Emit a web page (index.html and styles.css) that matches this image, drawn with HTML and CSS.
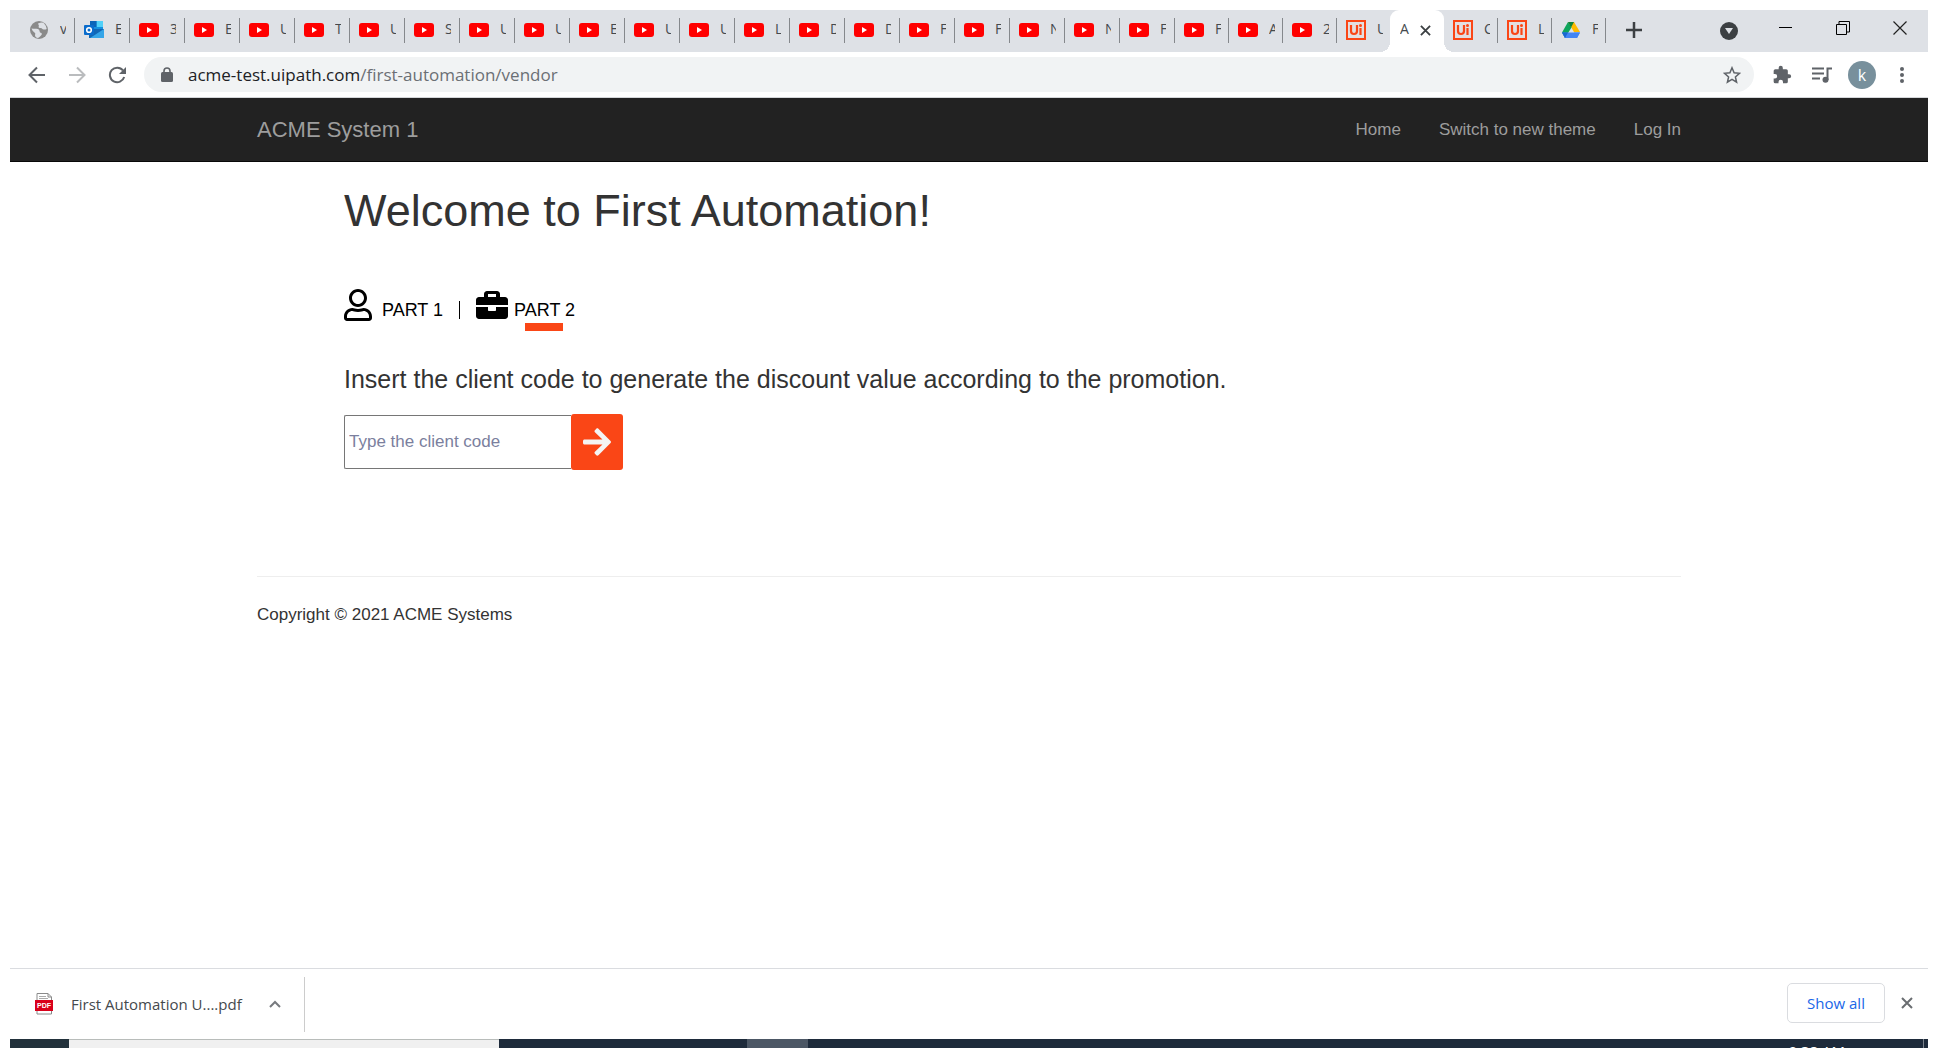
FILE: index.html
```html
<!DOCTYPE html>
<html lang="en">
<head>
<meta charset="utf-8">
<title>ACME System 1</title>
<link rel="stylesheet" href="styles.css">
</head>
<body>
<svg class="sprite" aria-hidden="true">
  <symbol id="yt" viewBox="0 0 20 20"><rect y="3" width="20" height="14" rx="3" fill="#f00"/><path d="M8 7l5 3-5 3z" fill="#fff"/></symbol>
  <symbol id="ui" viewBox="0 0 20 20"><rect x="1" y="1" width="18" height="18" fill="#e3dfe1" stroke="#fa4616" stroke-width="2"/><path d="M5 5v6q0 3 3 3t3-3V5M14.500 8v7" fill="none" stroke="#fa4616" stroke-width="2.200"/><circle cx="14.500" cy="5.500" r="1.500" fill="#fa4616"/></symbol>
</svg>
<div class="window">
  <header class="tabstrip">
    <nav class="tabs" id="tabs" aria-label="Browser tabs">
      <button class="tab"><svg class="fav" viewBox="0 0 20 20"><circle cx="10" cy="10" r="9" fill="#8a8a8a"/><path d="M2.500 8.500q3 .5 5 .2 3 .3 3 2.300t2 2q1 1-.5 2.500T9 18q-3-.5-3-3 1-1.500-.5-2.500-2-1-3-4zM9 3.500q5-2 6.500.5 2 2 2.200 5-2 1-4 .2-1-1.500-3.200-1.200-2-1-.5-2z" fill="#dee1e6"/></svg><span>v</span></button>
      <button class="tab"><svg class="fav" viewBox="0 0 20 20"><path d="M6 1h13v13H6z" fill="#1490df"/><path d="M12.500 1H19v6h-6.500z" fill="#50d0f8"/><path d="M6 1h6.500v6H6z" fill="#0a64b8"/><path d="M5 9l15 0v9H5z" fill="#1066b5"/><path d="M20 9v9H6z" fill="#35a5e8"/><rect y="5" width="10" height="10" rx="1" fill="#0a6ccc"/><circle cx="5" cy="10" r="2.300" fill="none" stroke="#fff" stroke-width="1.600"/></svg><span>E</span></button>
      <button class="tab"><svg class="fav"><use href="#yt"/></svg><span>3</span></button>
      <button class="tab"><svg class="fav"><use href="#yt"/></svg><span>E</span></button>
      <button class="tab"><svg class="fav"><use href="#yt"/></svg><span>U</span></button>
      <button class="tab"><svg class="fav"><use href="#yt"/></svg><span>T</span></button>
      <button class="tab"><svg class="fav"><use href="#yt"/></svg><span>U</span></button>
      <button class="tab"><svg class="fav"><use href="#yt"/></svg><span>S</span></button>
      <button class="tab"><svg class="fav"><use href="#yt"/></svg><span>U</span></button>
      <button class="tab"><svg class="fav"><use href="#yt"/></svg><span>U</span></button>
      <button class="tab"><svg class="fav"><use href="#yt"/></svg><span>E</span></button>
      <button class="tab"><svg class="fav"><use href="#yt"/></svg><span>U</span></button>
      <button class="tab"><svg class="fav"><use href="#yt"/></svg><span>U</span></button>
      <button class="tab"><svg class="fav"><use href="#yt"/></svg><span>L</span></button>
      <button class="tab"><svg class="fav"><use href="#yt"/></svg><span>D</span></button>
      <button class="tab"><svg class="fav"><use href="#yt"/></svg><span>D</span></button>
      <button class="tab"><svg class="fav"><use href="#yt"/></svg><span>F</span></button>
      <button class="tab"><svg class="fav"><use href="#yt"/></svg><span>F</span></button>
      <button class="tab"><svg class="fav"><use href="#yt"/></svg><span>N</span></button>
      <button class="tab"><svg class="fav"><use href="#yt"/></svg><span>N</span></button>
      <button class="tab"><svg class="fav"><use href="#yt"/></svg><span>F</span></button>
      <button class="tab slim"><svg class="fav"><use href="#yt"/></svg><span>F</span></button>
      <button class="tab slim"><svg class="fav"><use href="#yt"/></svg><span>A</span></button>
      <button class="tab slim"><svg class="fav"><use href="#yt"/></svg><span>2</span></button>
      <button class="tab plain"><svg class="fav"><use href="#ui"/></svg><span>U</span></button>
      <button class="tab slim active"><span>A</span><svg class="tab-x" viewBox="0 0 12 12"><path d="M1 1l10 10M11 1L1 11"/></svg></button>
      <button class="tab slim"><svg class="fav"><use href="#ui"/></svg><span>C</span></button>
      <button class="tab slim"><svg class="fav"><use href="#ui"/></svg><span>L</span></button>
      <button class="tab slim"><svg class="fav" viewBox="0 0 20 20"><path d="M7 2h6l6 10h-6z" fill="#ffba00"/><path d="M7 2l3.500 5.500L4 18 1 12.500z" fill="#0da55b"/><path d="M7 2h6l-3 5.500z" fill="#11833c"/><path d="M1 12.500L4 18h12l3-5.500z" fill="#4285f4"/><path d="M1 12.500h6L4 18z" fill="#1967d2"/><path d="M13 12.500h6L16 18z" fill="#4285f4"/></svg><span>F</span></button>
    </nav>
    <button class="new-tab" aria-label="New tab"><svg width="16" height="16" viewBox="0 0 16 16"><path d="M8 0v16M0 8h16" stroke="#3c4043" stroke-width="2.500"/></svg></button>
    <div class="window-controls">
      <button class="tab-search" aria-label="Search tabs"><svg width="18" height="18" viewBox="0 0 18 18"><circle cx="9" cy="9" r="9" fill="#3c4043"/><path d="M5 6h8l-4 6z" fill="#dee1e6"/></svg></button>
      <button aria-label="Minimize"><svg width="14" height="14" viewBox="0 0 14 14"><path d="M0 6.500h13" stroke="#000"/></svg></button>
      <button aria-label="Restore"><svg width="14" height="14" viewBox="0 0 14 14"><path d="M.5 3.500h10v10H.5zM3 3V.5h10.500V11H11" fill="none" stroke="#000"/></svg></button>
      <button aria-label="Close"><svg width="14" height="14" viewBox="0 0 14 14"><path d="M.5.5l13 13M13.500.5l-13 13" stroke="#222" stroke-width="1.200"/></svg></button>
    </div>
  </header>

  <div class="toolbar">
    <div class="history">
      <button aria-label="Back"><svg width="18" height="18" viewBox="0 0 18 18"><path d="M17 9H2M9 1.500L1.500 9 9 16.500" fill="none" stroke="#5f6368" stroke-width="2"/></svg></button>
      <button aria-label="Forward"><svg width="18" height="18" viewBox="0 0 18 18"><path d="M1 9h15M9 1.500L16.500 9 9 16.500" fill="none" stroke="#babcbe" stroke-width="2"/></svg></button>
      <button aria-label="Reload"><svg width="18" height="18" viewBox="0 0 18 18"><path d="M15 4.500A7.300 7.300 0 1 0 16.200 11" fill="none" stroke="#5f6368" stroke-width="2"/><path d="M18 1v7h-7z" fill="#5f6368"/></svg></button>
    </div>
    <div class="omnibox">
      <svg width="12" height="16" viewBox="0 0 12 16"><rect y="5" width="12" height="10" rx="1.500" fill="#5f6368"/><path d="M3 6V4a3 3 0 0 1 6 0v2" fill="none" stroke="#5f6368" stroke-width="1.600"/></svg>
      <a class="url" href="#">acme-test.uipath.com<span>/first-automation/vendor</span></a>
      <button aria-label="Bookmark"><svg width="18" height="18" viewBox="0 0 18 18"><path d="M9 1.800l2.100 5 5.400.5-4.100 3.600 1.200 5.300L9 13.400l-4.600 2.800 1.200-5.300-4.100-3.600 5.400-.5z" fill="none" stroke="#5f6368" stroke-width="1.500"/></svg></button>
    </div>
    <div class="actions">
      <button aria-label="Extensions"><svg width="20" height="20" viewBox="0 0 24 24"><path fill="#5f6368" d="M20.500 11H19V7a2 2 0 0 0-2-2h-4V3.500a2.500 2.500 0 0 0-5 0V5H4a2 2 0 0 0-2 2v3.800h1.500a2.700 2.700 0 0 1 0 5.400H2V20a2 2 0 0 0 2 2h3.800v-1.500a2.700 2.700 0 0 1 5.400 0V22H17a2 2 0 0 0 2-2v-4h1.500a2.500 2.500 0 0 0 0-5z"/></svg></button>
      <button aria-label="Media"><svg width="20" height="16" viewBox="0 0 20 16"><path d="M0 1.500h12M0 6.500h12M0 11.500h8M15.500 13V1.500H20" fill="none" stroke="#5f6368" stroke-width="2"/><circle cx="13.500" cy="12.800" r="3" fill="#5f6368"/></svg></button>
      <button aria-label="Profile"><span class="avatar">k</span></button>
      <button aria-label="Menu"><svg width="4" height="16" viewBox="0 0 4 16"><g fill="#5f6368"><circle cx="2" cy="2" r="2"/><circle cx="2" cy="8" r="2"/><circle cx="2" cy="14" r="2"/></g></svg></button>
    </div>
  </div>

  <div class="page">
    <nav class="navbar">
      <div class="container navbar-row">
        <a class="brand" href="#">ACME System 1</a>
        <div class="nav-links"><a href="#">Home</a><a href="#">Switch to new theme</a><a href="#">Log In</a></div>
      </div>
    </nav>
    <div class="container">
      <main class="content">
        <h1>Welcome to First Automation!</h1>
        <div class="parts">
          <a href="#" class="part"><svg width="28" height="32" viewBox="0 0 448 512"><path d="M313.600 304c-28.700 0-42.500 16-89.600 16s-60.800-16-89.600-16C60.200 304 0 364.200 0 438.400V464c0 26.500 21.500 48 48 48h352c26.500 0 48-21.500 48-48v-25.600c0-74.200-60.200-134.400-134.400-134.400zM400 464H48v-25.600c0-47.600 38.800-86.400 86.400-86.400 14.600 0 38.300 16 89.600 16 51.700 0 74.900-16 89.600-16 47.600 0 86.400 38.800 86.400 86.400V464zM224 288c79.500 0 144-64.500 144-144S303.500 0 224 0 80 64.500 80 144s64.500 144 144 144zm0-240c52.900 0 96 43.100 96 96s-43.100 96-96 96-96-43.100-96-96 43.100-96 96-96z"/></svg><span>PART 1</span></a>
          <i class="divider"></i>
          <a href="#" class="part current"><svg width="32" height="32" viewBox="0 0 512 512"><path d="M320 336c0 8.800-7.200 16-16 16h-96c-8.800 0-16-7.200-16-16v-48H0v144c0 25.600 22.400 48 48 48h416c25.600 0 48-22.400 48-48V288H320v48zm144-208h-80V80c0-25.600-22.400-48-48-48H176c-25.600 0-48 22.400-48 48v48H48c-25.600 0-48 22.400-48 48v80h512v-80c0-25.600-22.400-48-48-48zm-144 0H192V80h128v48z"/></svg><span>PART 2</span></a>
        </div>
        <form class="code-form">
          <label for="code">Insert the client code to generate the discount value according to the promotion.</label>
          <div class="field">
            <input id="code" type="text" placeholder="Type the client code">
            <button type="button" aria-label="Submit"><svg width="28" height="32" viewBox="0 0 448 512"><path fill="#f4f4f4" d="M190.500 66.900l22.200-22.200c9.400-9.400 24.600-9.400 33.900 0L441 239c9.400 9.400 9.400 24.600 0 33.900L246.600 467.300c-9.400 9.400-24.600 9.400-33.900 0l-22.200-22.200c-9.500-9.500-9.300-25 .4-34.300L311.400 296H24c-13.300 0-24-10.700-24-24v-32c0-13.300 10.700-24 24-24h287.400L190.900 101.200c-9.800-9.300-10-24.800-.4-34.300z"/></svg></button>
          </div>
        </form>
      </main>
      <footer class="footer">Copyright © 2021 ACME Systems</footer>
    </div>
  </div>

  <div class="downloads">
    <div class="download">
      <svg width="18" height="22" viewBox="0 0 18 22"><path d="M2 .5h11l3.500 3.500v17H2z" fill="#fff" stroke="#8a8a8a"/><path d="M4 3.500h7M4 5.500h9" stroke="#aaa"/><path d="M13 .5V4h3.500" fill="none" stroke="#8a8a8a"/><rect y="7" width="18" height="11" fill="#d9001b"/><text x="9" y="15" text-anchor="middle">PDF</text></svg>
      <a href="#">First Automation U....pdf</a>
      <button aria-label="Download options"><svg width="12" height="8" viewBox="0 0 12 8"><path d="M1 7l5-5 5 5" fill="none" stroke="#777a7e" stroke-width="2"/></svg></button>
    </div>
    <div class="download-actions">
      <button class="show-all">Show all</button>
      <button aria-label="Close downloads"><svg width="12" height="12" viewBox="0 0 12 12"><path d="M1 1l10 10M11 1L1 11" stroke="#6a6d71" stroke-width="2"/></svg></button>
    </div>
  </div>
  <div class="taskbar"><i class="start"></i><i class="search"></i><i class="gap"></i><i class="app"></i><span class="clock">9:38 AM</span><i class="desktop"></i></div>
</div>
</body>
</html>
```
FILE: styles.css
```css
* { box-sizing: border-box; }
body { margin: 0; background: #fff; color: #333; font-family: "Liberation Sans", Arial, sans-serif; font-size: 17px; }
button { border: 0; padding: 0; background: none; font: inherit; color: inherit; display: flex; align-items: center; justify-content: center; }
a { color: inherit; text-decoration: none; }
svg { display: block; flex: none; }
.sprite { position: absolute; width: 0; height: 0; }
.window { display: flex; flex-direction: column; height: 100vh; padding: 10px 10px 0; overflow: hidden; }

.tabstrip, .toolbar, .downloads { font-family: "Open Sans", "Noto Sans", sans-serif; flex: none; }
.tabstrip { display: flex; align-items: center; height: 42px; padding-left: 10px; background: #dee1e6; }
.tabs { display: flex; align-items: flex-end; height: 42px; }
.tab { position: relative; width: 55px; height: 25px; margin-bottom: 9px; padding: 0 0 1px 9px; gap: 11px; justify-content: flex-start; border-right: 1px solid #85888c; font-size: 14px; line-height: 18px; color: #45494d; }
.tab.slim { width: 54px; }
.tab.plain { width: 53px; border: 0; }
.tab span { width: 6px; height: 20px; overflow: hidden; text-align: left; }
.fav { width: 20px; height: 20px; }
.tab.active { height: 42px; margin: 0; padding: 0 0 2px 10px; gap: 10px; border: 0; border-radius: 9px 9px 0 0; background: #fff; }
.tab.active::before, .tab.active::after { content: ""; position: absolute; bottom: 0; width: 10px; height: 10px; }
.tab.active::before { left: -10px; background: radial-gradient(circle at 0 0, #dee1e6 10px, #fff 10px); }
.tab.active::after { right: -10px; background: radial-gradient(circle at 100% 0, #dee1e6 10px, #fff 10px); }
.tab.active span { width: 10px; }
.tab-x { width: 11px; height: 11px; stroke: #3c4043; stroke-width: 2; }
.new-tab { width: 56px; height: 42px; padding-bottom: 2px; }
.window-controls { display: flex; margin-left: auto; height: 42px; padding-bottom: 6px; }
.window-controls button { width: 57px; }
.window-controls .tab-search { padding-top: 6px; }

.toolbar { display: flex; align-items: center; height: 46px; padding: 0 6px 0 9px; border-bottom: 1px solid #d5d7da; }
.history { display: flex; gap: 4px; padding-right: 9px; }
.history button { width: 36px; height: 36px; }
.omnibox { flex: 1; display: flex; align-items: center; gap: 15px; height: 35px; padding: 0 13px 0 17px; border-radius: 18px; background: #f1f3f4; }
.url { flex: 1; font-size: 17px; color: #202124; }
.url span { color: #6b6f74; }
.actions { display: flex; align-items: center; padding-left: 8px; }
.actions button { width: 40px; height: 36px; }
.avatar { width: 28px; height: 28px; border-radius: 50%; background: #78909c; color: #fff; font-size: 16px; line-height: 28px; }

.page { flex: 1; }
.container { max-width: 1462px; margin: 0 auto; padding: 0 19px; }
.navbar { background: #222; border-bottom: 1px solid #080808; color: #9d9d9d; }
.navbar-row { display: flex; align-items: center; justify-content: space-between; height: 63px; }
.brand { font-size: 22px; }
.nav-links { display: flex; gap: 38px; }
.content { padding: 0 87px; }
h1 { margin: 23px 0 0; font-size: 45px; line-height: 52px; font-weight: 400; }
.parts { display: flex; align-items: center; gap: 16px; margin-top: 52px; color: #000; font-size: 18px; }
.part { position: relative; display: flex; gap: 10px; }
.part span { line-height: 42px; }
.part.current { gap: 6px; }
.part.current::after { content: ""; position: absolute; right: 12px; bottom: 0; width: 38px; height: 8px; background: #fa4616; }
.divider { width: 1px; height: 18px; background: #000; }
.code-form label { display: block; margin-top: 33px; font-size: 25px; line-height: 30px; }
.field { display: flex; align-items: center; margin-top: 20px; }
.field input { width: 227px; height: 54px; padding: 0 4px; border: 1px solid #767676; border-right: 0; border-radius: 2px 0 0 2px; font: inherit; }
.field input::placeholder { color: #7b7f9e; opacity: 1; }
.field button { width: 52px; height: 56px; border-radius: 3px; background: #fa4616; }
.footer { margin-top: 106px; padding-top: 26px; border-top: 1px solid #eee; line-height: 24px; }

.downloads { display: flex; align-items: center; justify-content: space-between; height: 71px; border-top: 1px solid #dadce0; padding-right: 15px; font-size: 15px; }
.download { display: flex; align-items: center; gap: 18px; height: 55px; padding: 0 23px 0 25px; border-right: 1px solid #ccc; color: #45494d; }
.download text { font: bold 7px "Liberation Sans", sans-serif; fill: #fff; }
.download button { padding-left: 9px; }
.download-actions { display: flex; align-items: center; gap: 16px; padding-bottom: 2px; }
.show-all { width: 98px; height: 40px; border: 1px solid #dadce0; border-radius: 5px; color: #1a67e8; font-size: 15px; }
.taskbar { display: flex; flex: none; height: 9px; background: #1e2b3b; overflow: hidden; }
.start { width: 59px; background: #22313b; }
.search { width: 430px; background: #f0f0f0; border-top: 1px solid #b8bcba; }
.gap { width: 248px; }
.app { width: 61px; background: #4c5765; }
.clock { margin-left: auto; padding-top: 3px; font: 15px/18px "Open Sans", sans-serif; color: #fff; }
.desktop { width: 5px; margin-left: 78px; border-left: 1px solid #7b838c; }
```
